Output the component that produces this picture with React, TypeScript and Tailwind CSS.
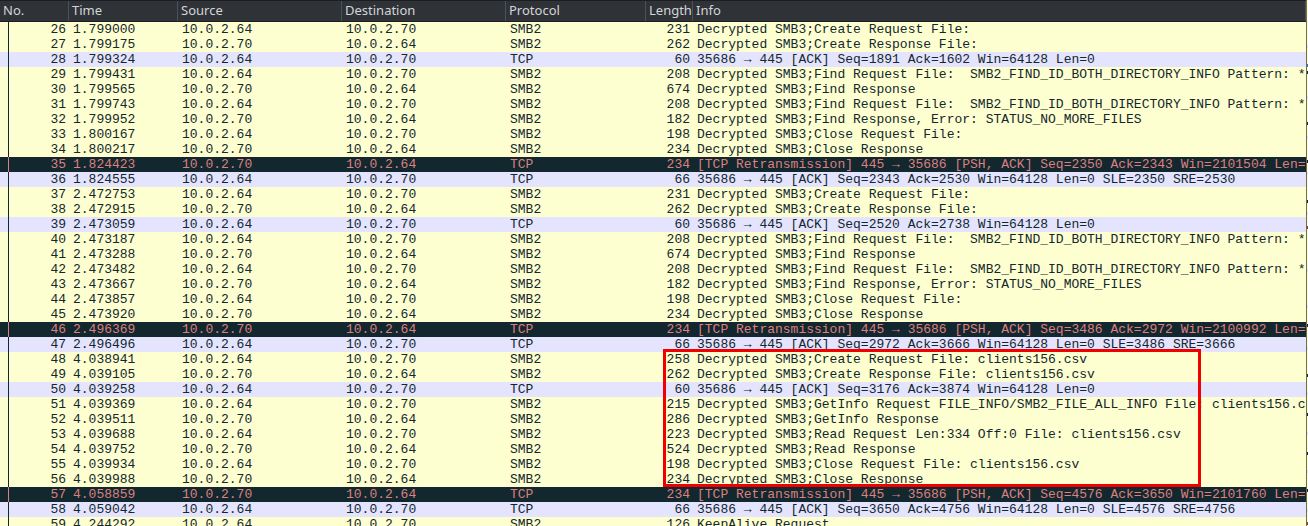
type Row = [number, string, string, string, string, number, string];

const smbFind = "Decrypted SMB3;Find Request File:  SMB2_FIND_ID_BOTH_DIRECTORY_INFO Pattern: *";

const rows: Row[] = [
  [26, "1.799000", "10.0.2.64", "10.0.2.70", "SMB2", 231, "Decrypted SMB3;Create Request File:"],
  [27, "1.799175", "10.0.2.70", "10.0.2.64", "SMB2", 262, "Decrypted SMB3;Create Response File:"],
  [28, "1.799324", "10.0.2.64", "10.0.2.70", "TCP", 60, "35686 → 445 [ACK] Seq=1891 Ack=1602 Win=64128 Len=0"],
  [29, "1.799431", "10.0.2.64", "10.0.2.70", "SMB2", 208, smbFind],
  [30, "1.799565", "10.0.2.70", "10.0.2.64", "SMB2", 674, "Decrypted SMB3;Find Response"],
  [31, "1.799743", "10.0.2.64", "10.0.2.70", "SMB2", 208, smbFind],
  [32, "1.799952", "10.0.2.70", "10.0.2.64", "SMB2", 182, "Decrypted SMB3;Find Response, Error: STATUS_NO_MORE_FILES"],
  [33, "1.800167", "10.0.2.64", "10.0.2.70", "SMB2", 198, "Decrypted SMB3;Close Request File:"],
  [34, "1.800217", "10.0.2.70", "10.0.2.64", "SMB2", 234, "Decrypted SMB3;Close Response"],
  [35, "1.824423", "10.0.2.70", "10.0.2.64", "TCP", 234, "[TCP Retransmission] 445 → 35686 [PSH, ACK] Seq=2350 Ack=2343 Win=2101504 Len="],
  [36, "1.824555", "10.0.2.64", "10.0.2.70", "TCP", 66, "35686 → 445 [ACK] Seq=2343 Ack=2530 Win=64128 Len=0 SLE=2350 SRE=2530"],
  [37, "2.472753", "10.0.2.64", "10.0.2.70", "SMB2", 231, "Decrypted SMB3;Create Request File:"],
  [38, "2.472915", "10.0.2.70", "10.0.2.64", "SMB2", 262, "Decrypted SMB3;Create Response File:"],
  [39, "2.473059", "10.0.2.64", "10.0.2.70", "TCP", 60, "35686 → 445 [ACK] Seq=2520 Ack=2738 Win=64128 Len=0"],
  [40, "2.473187", "10.0.2.64", "10.0.2.70", "SMB2", 208, smbFind],
  [41, "2.473288", "10.0.2.70", "10.0.2.64", "SMB2", 674, "Decrypted SMB3;Find Response"],
  [42, "2.473482", "10.0.2.64", "10.0.2.70", "SMB2", 208, smbFind],
  [43, "2.473667", "10.0.2.70", "10.0.2.64", "SMB2", 182, "Decrypted SMB3;Find Response, Error: STATUS_NO_MORE_FILES"],
  [44, "2.473857", "10.0.2.64", "10.0.2.70", "SMB2", 198, "Decrypted SMB3;Close Request File:"],
  [45, "2.473920", "10.0.2.70", "10.0.2.64", "SMB2", 234, "Decrypted SMB3;Close Response"],
  [46, "2.496369", "10.0.2.70", "10.0.2.64", "TCP", 234, "[TCP Retransmission] 445 → 35686 [PSH, ACK] Seq=3486 Ack=2972 Win=2100992 Len="],
  [47, "2.496496", "10.0.2.64", "10.0.2.70", "TCP", 66, "35686 → 445 [ACK] Seq=2972 Ack=3666 Win=64128 Len=0 SLE=3486 SRE=3666"],
  [48, "4.038941", "10.0.2.64", "10.0.2.70", "SMB2", 258, "Decrypted SMB3;Create Request File: clients156.csv"],
  [49, "4.039105", "10.0.2.70", "10.0.2.64", "SMB2", 262, "Decrypted SMB3;Create Response File: clients156.csv"],
  [50, "4.039258", "10.0.2.64", "10.0.2.70", "TCP", 60, "35686 → 445 [ACK] Seq=3176 Ack=3874 Win=64128 Len=0"],
  [51, "4.039369", "10.0.2.64", "10.0.2.70", "SMB2", 215, "Decrypted SMB3;GetInfo Request FILE_INFO/SMB2_FILE_ALL_INFO File: clients156.c"],
  [52, "4.039511", "10.0.2.70", "10.0.2.64", "SMB2", 286, "Decrypted SMB3;GetInfo Response"],
  [53, "4.039688", "10.0.2.64", "10.0.2.70", "SMB2", 223, "Decrypted SMB3;Read Request Len:334 Off:0 File: clients156.csv"],
  [54, "4.039752", "10.0.2.70", "10.0.2.64", "SMB2", 524, "Decrypted SMB3;Read Response"],
  [55, "4.039934", "10.0.2.64", "10.0.2.70", "SMB2", 198, "Decrypted SMB3;Close Request File: clients156.csv"],
  [56, "4.039988", "10.0.2.70", "10.0.2.64", "SMB2", 234, "Decrypted SMB3;Close Response"],
  [57, "4.058859", "10.0.2.70", "10.0.2.64", "TCP", 234, "[TCP Retransmission] 445 → 35686 [PSH, ACK] Seq=4576 Ack=3650 Win=2101760 Len="],
  [58, "4.059042", "10.0.2.64", "10.0.2.70", "TCP", 66, "35686 → 445 [ACK] Seq=3650 Ack=4756 Win=64128 Len=0 SLE=4576 SRE=4756"],
  [59, "4.244292", "10.0.2.64", "10.0.2.70", "SMB2", 126, "KeepAlive Request"],
];

const headers = [
  { label: "No.", cls: "w-[69px]" },
  { label: "Time", cls: "w-[109px]" },
  { label: "Source", cls: "w-[164px]" },
  { label: "Destination", cls: "w-[164px]" },
  { label: "Protocol", cls: "w-[140px]" },
  { label: "Length", cls: "w-[47px]" },
  { label: "Info", cls: "flex-1" },
];

// scrollbar minimap ticks: [top, colour]
const ticks: [number, string][] = [
  [45, "bg-[#e4e4ff]"], [64, "bg-[#3f6fb5]"], [71, "bg-[#12272e]"], [96, "bg-[#e4e4ff]"],
  [122, "bg-[#12272e]"], [136, "bg-[#e4e4ff]"], [160, "bg-[#12272e]"], [172, "bg-[#e4e4ff]"],
  [200, "bg-[#12272e]"], [212, "bg-[#e4e4ff]"], [226, "bg-[#a0303a]"], [269, "bg-[#e4e4ff]"],
  [305, "bg-[#e4e4ff]"], [324, "bg-[#12272e]"], [347, "bg-[#e4e4ff]"], [374, "bg-[#12272e]"],
  [392, "bg-[#e4e4ff]"], [413, "bg-[#12272e]"], [432, "bg-[#e4e4ff]"], [452, "bg-[#12272e]"],
  [470, "bg-[#e4e4ff]"], [489, "bg-[#12272e]"], [509, "bg-[#e4e4ff]"], [522, "bg-[#a0303a]"],
];

function rowStyle(row: Row) {
  if (row[4] === "TCP" && row[6].startsWith("[TCP")) return "bg-[#12272e] text-[#dc8080]";
  if (row[4] === "TCP") return "bg-[#e4e4ff] text-[#12272e]";
  return "bg-[#feffd0] text-[#12272e]";
}

export default function App() {
  return (
    <div className="relative flex w-[1308px] h-[526px] overflow-hidden bg-[#feffd0]">
      <div className="flex-1 min-w-0">
        <div className="flex h-[22px] bg-[#2f3237] border-t border-b border-[#1c1e21] text-[#d3d5d8] text-[13px] font-['Noto_Sans',sans-serif]">
          {headers.map((h) => (
            <div key={h.label} className={`${h.cls} pl-[3px] flex items-center border-r border-[#4d5056] whitespace-nowrap overflow-hidden`}>
              {h.label}
            </div>
          ))}
        </div>

        <div className="font-['Liberation_Mono',monospace] text-[13px]">
          {rows.map((row) => (
            <div key={row[0]} className={`relative flex h-[15px] leading-[15px] whitespace-pre ${rowStyle(row)}`}>
              <div className="w-[69px] pr-[3px] text-right">{row[0]}</div>
              <div className="w-[109px] pl-[4px]">{row[1]}</div>
              <div className="w-[164px] pl-[4px]">{row[2]}</div>
              <div className="w-[164px] pl-[4px]">{row[3]}</div>
              <div className="w-[140px] pl-[4px]">{row[4]}</div>
              <div className="w-[47px] pr-[3px] text-right">{row[5]}</div>
              <div className="flex-1 min-w-0 pl-[4px]">{row[6]}</div>
              {/* related packet line */}
              <div className="absolute left-[8px] top-0 bottom-0 w-px bg-current" />
            </div>
          ))}
        </div>
      </div>

      {/* thin scrollbar with packet minimap */}
      <div className="relative w-[2px] shrink-0 border-l border-[#6e6e55] bg-[#feffd0]">
        {ticks.map(([top, color]) => (
          <div key={top} className={`absolute left-0 w-px h-[3px] ${color}`} style={{ top }} />
        ))}
      </div>

      {/* red highlight box */}
      <div className="absolute left-[663px] top-[349px] w-[538px] h-[138px] border-[3px] border-[#f00000]" />
    </div>
  );
}
